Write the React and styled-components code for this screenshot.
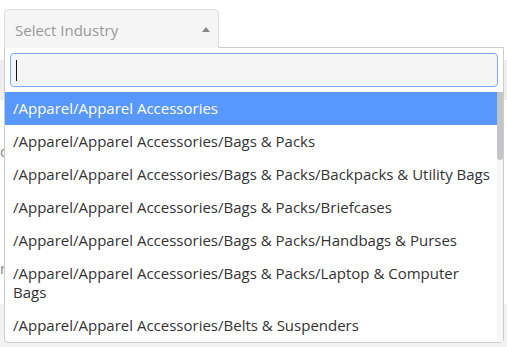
import React from "react";
import styled, { createGlobalStyle } from "styled-components";

const Global = createGlobalStyle`
  html, body { margin: 0; padding: 0; background: #fff; }
  body { font-family: "Open Sans", "Liberation Sans", sans-serif; overflow: hidden; }
  * { box-sizing: border-box; }
`;

const Page = styled.div`
  position: relative;
  width: 507px;
  height: 347px;
  padding-top: 9px;
  overflow: hidden;
`;

const SelectWrap = styled.div`
  position: relative;
  margin-left: 4px;
  width: 215px;
  z-index: 2;
`;

const SelectBox = styled.div`
  position: relative;
  z-index: 3;
  height: 39px;
  display: flex;
  align-items: center;
  justify-content: space-between;
  padding: 2px 8px 0 10px;
  background: #f5f5f5;
  border: 1px solid #dcdcdc;
  border-bottom: none;
  border-radius: 5px 5px 0 0;
  color: #999;
  font-size: 15px;
`;

const Arrow = styled.span`
  width: 0;
  height: 0;
  border-left: 4px solid transparent;
  border-right: 4px solid transparent;
  border-bottom: 5px solid #888;
  margin-top: -1px;
`;

const Dropdown = styled.div`
  position: absolute;
  top: 38px;
  left: 0;
  width: 500px;
  background: #fff;
  border: 1px solid #ccc;
  border-radius: 0 0 4px 4px;
  z-index: 2;
`;

const SearchRow = styled.div`
  padding: 5px;
`;

const SearchInput = styled.div`
  height: 34px;
  border: 1px solid #7aacf2;
  border-radius: 4px;
  background: #f5f5f5;
  display: flex;
  align-items: center;
  padding-left: 5px;
`;

const Caret = styled.span`
  width: 1px;
  height: 21px;
  background: #111;
`;

const Results = styled.div`
  display: flex;
  height: 250px;
  overflow: hidden;
`;

const List = styled.ul`
  flex: 1;
  list-style: none;
  margin: 0;
  padding: 0;
  overflow: hidden;
`;

const Track = styled.div`
  width: 6px;
  background: #f7f7f7;
  display: flex;
  flex-direction: column;
`;

const Thumb = styled.div`
  height: 68px;
  background: #c1c5c9;
  border-radius: 0 0 3px 3px;
`;

const Option = styled.li`
  padding: 7px 2px 7px 8px;
  font-size: 15px;
  line-height: 19px;
  color: ${(p) => (p.$active ? "#fff" : "#333")};
  background: ${(p) => (p.$active ? "#5897fb" : "transparent")};
`;

const Band = styled.div`
  margin-top: ${(p) => p.$top}px;
  height: ${(p) => p.$h}px;
  background: ${(p) => p.$bg};
`;

const BgLabel = styled.div`
  margin-top: ${(p) => p.$top}px;
  font-size: 15px;
  line-height: 19px;
  color: #888;
  white-space: nowrap;
`;

const options = [
  "/Apparel/Apparel Accessories",
  "/Apparel/Apparel Accessories/Bags & Packs",
  "/Apparel/Apparel Accessories/Bags & Packs/Backpacks & Utility Bags",
  "/Apparel/Apparel Accessories/Bags & Packs/Briefcases",
  "/Apparel/Apparel Accessories/Bags & Packs/Handbags & Purses",
  "/Apparel/Apparel Accessories/Bags & Packs/Laptop & Computer Bags",
  "/Apparel/Apparel Accessories/Belts & Suspenders",
];

export default function App() {
  return (
    <>
      <Global />
      <Page>
        <SelectWrap>
          <SelectBox>
            <span>Select Industry</span>
            <Arrow />
          </SelectBox>
          <Dropdown>
            <SearchRow>
              <SearchInput>
                <Caret />
              </SearchInput>
            </SearchRow>
            <Results>
              <List>
                {options.map((o, i) => (
                  <Option key={o} $active={i === 0}>
                    {o}
                  </Option>
                ))}
              </List>
              <Track>
                <Thumb />
              </Track>
            </Results>
          </Dropdown>
        </SelectWrap>
        <Band $top={12} $h={40} $bg="#eeeeee" />
        <BgLabel $top={42}>dd</BgLabel>
        <BgLabel $top={98}>rr</BgLabel>
        <Band $top={26} $h={60} $bg="#f2f2f2" />
      </Page>
    </>
  );
}
